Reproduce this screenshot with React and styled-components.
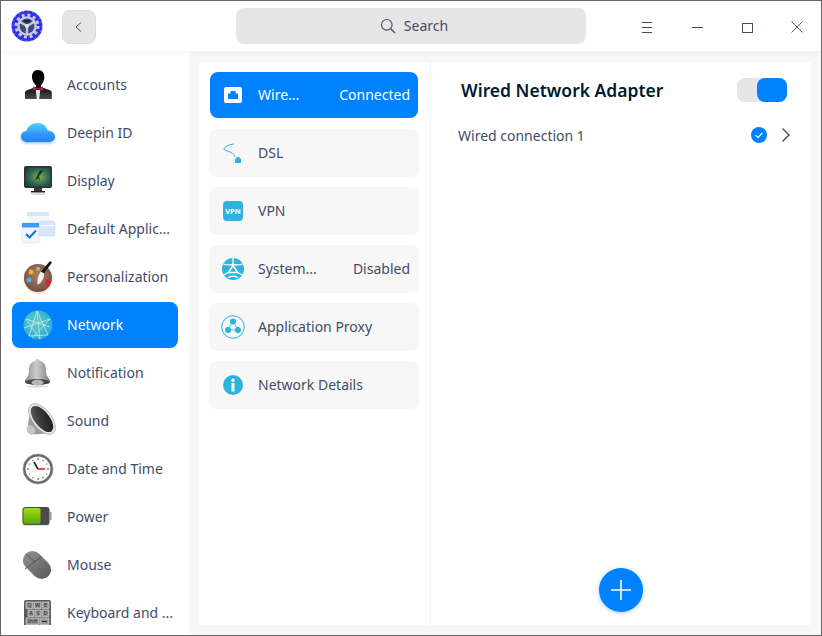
import styled, { createGlobalStyle } from 'styled-components'

const GlobalStyle = createGlobalStyle`
  html, body { margin: 0; padding: 0; background: #fff; }
  body { font-family: "Noto Sans", "Liberation Sans", sans-serif; }
  * { box-sizing: border-box; }
`

const AccountsIcon = () => (
  <svg width="36" height="36" viewBox="0 0 36 36">
    <defs>
      <linearGradient id="suit" x1="0" y1="0" x2="0" y2="1">
        <stop offset="0" stopColor="#000" />
        <stop offset=".6" stopColor="#111" />
        <stop offset="1" stopColor="#4a4a4a" />
      </linearGradient>
    </defs>
    <path d="M18 3c4.600 0 6.400 3.400 6.400 7 0 4-2.200 7-3.400 8.300v1.700l9 3.200c1.200.5 1.800 1.400 1.800 2.800V32H5v-6c0-1.400.6-2.300 1.800-2.800l9.200-3.200v-1.700C14.700 17 12 14 12 10c0-3.600 1.400-7 6-7z" fill="url(#suit)" />
    <path d="M15.800 23h4.400l-1 9h-2.400z" fill="#e8e8e8" />
    <path d="M13 19.500l4.500 1.800h1l4.500-1.800v4l-4.500-1.500h-1L13 23.500z" fill="#c2185b" />
  </svg>
)

const CloudIcon = () => (
  <svg width="36" height="36" viewBox="0 0 36 36">
    <defs>
      <linearGradient id="cloud" x1="0" y1="0" x2="0" y2="1">
        <stop offset="0" stopColor="#4ed2fb" />
        <stop offset=".6" stopColor="#2f96fb" />
        <stop offset="1" stopColor="#2b80fa" />
      </linearGradient>
      <filter id="cloudGlow" x="-20%" y="-20%" width="140%" height="150%">
        <feDropShadow dx="0" dy="1.500" stdDeviation="1.200" floodColor="#2b80fa" floodOpacity=".45" />
      </filter>
    </defs>
    <path d="M7.500 27C3.600 27 1 24.500 1 21.500c0-3 2.400-5.300 5.400-5.400C8 11.300 12 8 17.500 8c5.300 0 9 3 10 7.500 4 .3 7.500 2.500 7.500 6 0 3.200-2.800 5.500-6 5.500z" fill="url(#cloud)" filter="url(#cloudGlow)" />
  </svg>
)

const DisplayIcon = () => (
  <svg width="36" height="36" viewBox="0 0 36 36">
    <defs>
      <radialGradient id="wall" cx=".55" cy=".5" r=".7">
        <stop offset="0" stopColor="#86b13f" />
        <stop offset=".55" stopColor="#2f6a55" />
        <stop offset="1" stopColor="#1a3a44" />
      </radialGradient>
    </defs>
    <rect x="4" y="3" width="28" height="22" rx="2" fill="#2f2f2f" />
    <rect x="5.500" y="4.500" width="25" height="19" fill="url(#wall)" />
    <path d="M20 7l-3 6-2 5 3-3 2 3-1-5 4-5z" fill="#1d2a22" />
    <path d="M14 25h8v3h-8z" fill="#3a3a3a" />
    <path d="M11 28h14v1.500H11z" fill="#222" />
    <ellipse cx="18" cy="31" rx="8" ry="1" fill="#000" opacity=".15" />
  </svg>
)

const DefaultAppsIcon = () => (
  <svg width="36" height="36" viewBox="0 0 36 36">
    <rect x="7" y="1" width="22" height="20" rx="2" fill="#d6e6fb" />
    <rect x="7" y="5" width="22" height="14" fill="#f3f8fe" />
    <rect x="19" y="10" width="16" height="15" rx="2" fill="#d6e6fb" stroke="#c4dbf7" strokeWidth=".6" />
    <rect x="19.500" y="14" width="15" height="1" fill="#fff" />
    <rect x="2" y="12" width="17" height="20" rx="1.500" fill="#eef5fe" stroke="#c9dff9" strokeWidth=".6" />
    <rect x="2" y="12" width="17" height="4.500" fill="#3d9cf5" />
    <path d="M6 23l3.500 3.500L16 19.500" fill="none" stroke="#1272e6" strokeWidth="2" />
  </svg>
)

const PaletteIcon = () => (
  <svg width="36" height="36" viewBox="0 0 36 36">
    <defs>
      <radialGradient id="wood" cx=".5" cy=".4" r=".7">
        <stop offset="0" stopColor="#a8826a" />
        <stop offset="1" stopColor="#6a4632" />
      </radialGradient>
    </defs>
    <ellipse cx="18" cy="20" rx="15" ry="15" fill="#e9a98e" opacity=".35" />
    <circle cx="18" cy="19" r="14" fill="url(#wood)" />
    <circle cx="11" cy="13" r="2.500" fill="#f0b429" />
    <circle cx="18" cy="10" r="2.200" fill="#b8a48e" />
    <circle cx="9" cy="21" r="2.500" fill="#5aa7f2" />
    <circle cx="28" cy="23" r="2.500" fill="#e0184a" />
    <path d="M30 2l2 1.500-8 11-3-2z" fill="#1b1b1b" />
    <path d="M21 12.500l3 2.200c.5 4-2.500 9-6 11-1.500-3 0-9.500 3-13.200z" fill="#f4efe8" />
  </svg>
)

const GlobeIcon = () => (
  <svg width="36" height="36" viewBox="0 0 36 36">
    <defs>
      <radialGradient id="globe" cx=".4" cy=".4" r=".7">
        <stop offset="0" stopColor="#5fcfc0" />
        <stop offset="1" stopColor="#2aa3dc" />
      </radialGradient>
    </defs>
    <circle cx="18" cy="18" r="14.500" fill="url(#globe)" />
    <path d="M17 4l-8 25M17 4l11 24M6 12l24 8M4 21l26-9M9 29l19-1M17 4l3 28M6 12l14 20M30 12L12 31" fill="none" stroke="#e6f8fb" strokeWidth=".7" opacity=".85" />
  </svg>
)

const BellIcon = () => (
  <svg width="36" height="36" viewBox="0 0 36 36">
    <defs>
      <linearGradient id="bell" x1="0" y1="0" x2="1" y2="0">
        <stop offset="0" stopColor="#8a8a8a" />
        <stop offset=".45" stopColor="#cdcdcd" />
        <stop offset="1" stopColor="#808080" />
      </linearGradient>
    </defs>
    <path d="M17.500 4c1.200 0 2 .8 2 1.800C25 7 26 11 26 16c0 3.500 1.500 6.500 4 9v2H5v-2c2.500-2.500 4-5.500 4-9 0-5 1-9 6.500-10.200C15.500 4.800 16.300 4 17.500 4z" fill="url(#bell)" />
    <ellipse cx="17.500" cy="27" rx="12.500" ry="3" fill="#454545" />
    <ellipse cx="17.500" cy="27.500" rx="6" ry="3" fill="#b5b5b5" />
    <ellipse cx="17.500" cy="31.500" rx="11" ry="1" fill="#000" opacity=".15" />
  </svg>
)

const SpeakerIcon = () => (
  <svg width="36" height="36" viewBox="0 0 36 36">
    <defs>
      <linearGradient id="cone" x1="1" y1="0" x2="0" y2="1">
        <stop offset="0" stopColor="#151515" />
        <stop offset=".6" stopColor="#3c3c3c" />
        <stop offset="1" stopColor="#6a6a6a" />
      </linearGradient>
    </defs>
    <path d="M11 2l22 28-19 1.500-6-9.500z" fill="#9c9c9c" />
    <ellipse cx="11" cy="27" rx="4" ry="5" fill="#c4c4c4" transform="rotate(-30 11 27)" />
    <ellipse cx="22" cy="16" rx="18" ry="9.500" fill="#e4e4e4" stroke="#8c8c8c" strokeWidth=".5" transform="rotate(52 22 16)" />
    <ellipse cx="22" cy="16" rx="15.500" ry="7.500" fill="url(#cone)" transform="rotate(52 22 16)" />
  </svg>
)

const ClockIcon = () => (
  <svg width="36" height="36" viewBox="0 0 36 36">
    <circle cx="18" cy="18" r="15" fill="#666" />
    <circle cx="18" cy="18" r="15" fill="none" stroke="#9a9a9a" strokeWidth=".8" />
    <circle cx="18" cy="18" r="12.500" fill="#fbfbfb" />
    <g fill="#333">
      <circle cx="18" cy="8" r=".8" /><circle cx="18" cy="28" r=".8" /><circle cx="8" cy="18" r=".8" /><circle cx="28" cy="18" r=".8" />
      <circle cx="13" cy="9.300" r=".6" /><circle cx="23" cy="9.300" r=".6" /><circle cx="13" cy="26.700" r=".6" /><circle cx="23" cy="26.700" r=".6" />
      <circle cx="9.300" cy="13" r=".6" /><circle cx="26.700" cy="13" r=".6" /><circle cx="9.300" cy="23" r=".6" /><circle cx="26.700" cy="23" r=".6" />
    </g>
    <path d="M14 11l4 7" stroke="#222" strokeWidth="1.600" />
    <path d="M18 18h7" stroke="#e5393d" strokeWidth="1.800" />
  </svg>
)

const BatteryIcon = () => (
  <svg width="36" height="36" viewBox="0 0 36 36">
    <defs>
      <linearGradient id="charge" x1="0" y1="0" x2="0" y2="1">
        <stop offset="0" stopColor="#a4dc1e" />
        <stop offset="1" stopColor="#5aa600" />
      </linearGradient>
    </defs>
    <rect x="2" y="9" width="28" height="18.500" rx="3" fill="#b8e986" opacity=".45" />
    <rect x="2.500" y="8" width="27" height="18" rx="3" fill="#4b4b4b" />
    <rect x="29.500" y="13" width="2" height="8" fill="#9a9a9a" />
    <rect x="3.500" y="9" width="17" height="16" rx="2" fill="url(#charge)" />
  </svg>
)

const MouseIcon = () => (
  <svg width="36" height="36" viewBox="0 0 36 36">
    <defs>
      <linearGradient id="mouseBody" x1="0" y1="0" x2="0" y2="1">
        <stop offset="0" stopColor="#8e8e8e" />
        <stop offset="1" stopColor="#5c5c5c" />
      </linearGradient>
    </defs>
    <rect x="7.500" y="2" width="19" height="32" rx="9.500" fill="url(#mouseBody)" transform="rotate(-45 17 18)" />
    <path d="M6 7l9 8M5 22l16-12" stroke="#484848" strokeWidth=".8" fill="none" />
  </svg>
)

const KeyboardIcon = () => (
  <svg width="36" height="36" viewBox="0 0 36 36">
    <rect x="4" y="5" width="27" height="30" rx="2" fill="#5c5c5c" />
    <g fill="#9a9a9a" stroke="#dedede" strokeWidth=".6">
      <rect x="6" y="7" width="7" height="6.500" />
      <rect x="14" y="7" width="7" height="6.500" />
      <rect x="22" y="7" width="7" height="6.500" />
      <rect x="8" y="15" width="6" height="6.500" />
      <rect x="15" y="15" width="6" height="6.500" />
      <rect x="22" y="15" width="7" height="6.500" />
      <rect x="6" y="23" width="13" height="6.500" />
      <rect x="20" y="23" width="9" height="6.500" />
    </g>
    <g fill="#222" fontFamily="Noto Sans, sans-serif" fontSize="5.500" textAnchor="middle">
      <text x="9.500" y="12.300">Q</text>
      <text x="17.500" y="12.300">W</text>
      <text x="25.500" y="12.300">E</text>
      <text x="11" y="20.300">A</text>
      <text x="18" y="20.300">S</text>
      <text x="25.500" y="20.300">D</text>
      <text x="12.500" y="28.300" fontSize="4.800">Shift</text>
    </g>
    <path d="M22 26.500h5" stroke="#222" strokeWidth="1" />
  </svg>
)

const JackIcon = () => (
  <svg width="20" height="20" viewBox="0 0 20 20">
    <rect x="1" y="2" width="18" height="16" rx="2" fill="#fff" />
    <path d="M5 14V8.500h2.500V6h5v2.500H15V14z" fill="#0081ff" />
  </svg>
)

const CableIcon = () => (
  <svg width="22" height="22" viewBox="0 0 22 22">
    <path d="M12 2C7 2.500 2 4.500 2 7c0 2.500 9 1.500 11 8" fill="none" stroke="#2cb3de" strokeWidth="1" />
    <path d="M14.500 15h3v1.500H19V21h-6v-4.500h1.500z" fill="#2cb3de" />
  </svg>
)

const VpnIcon = () => (
  <VpnBadge>VPN</VpnBadge>
)

const SystemIcon = () => (
  <svg width="22" height="22" viewBox="0 0 22 22">
    <circle cx="11" cy="11" r="11" fill="#2cb3de" />
    <path d="M11 0v6.500M1.500 6c4 1.500 7 1 9.500 .5 2.500 .5 5.500 1 9.500-.5M6.500 14.500L1.500 17M15.500 14.500l5 2.500M6 19.500c3-1.500 7-1.500 10 0" fill="none" stroke="#fff" strokeWidth="1.300" />
    <path d="M11 7.500l4.500 7h-9z" fill="#2cb3de" stroke="#fff" strokeWidth="1.600" />
  </svg>
)

const ProxyIcon = () => (
  <svg width="24" height="24" viewBox="0 0 24 24">
    <circle cx="12" cy="12" r="11.300" fill="none" stroke="#2cb3de" strokeWidth="1" />
    <path d="M12 6l5 9H7z" fill="none" stroke="#2cb3de" strokeWidth=".8" />
    <circle cx="12" cy="6.500" r="3" fill="#2cb3de" />
    <circle cx="7" cy="15" r="3" fill="#2cb3de" />
    <circle cx="17" cy="15" r="3" fill="#2cb3de" />
  </svg>
)

const InfoIcon = () => (
  <svg width="20" height="20" viewBox="0 0 20 20">
    <circle cx="10" cy="10" r="10" fill="#2cb3de" />
    <circle cx="10" cy="5.200" r="1.700" fill="#fff" />
    <rect x="8.500" y="8" width="3" height="8.500" rx=".5" fill="#fff" />
  </svg>
)

const sideItems = [
  { name: 'Accounts', icon: <AccountsIcon /> },
  { name: 'Deepin ID', icon: <CloudIcon /> },
  { name: 'Display', icon: <DisplayIcon /> },
  { name: 'Default Applic...', icon: <DefaultAppsIcon /> },
  { name: 'Personalization', icon: <PaletteIcon /> },
  { name: 'Network', icon: <GlobeIcon />, active: true },
  { name: 'Notification', icon: <BellIcon /> },
  { name: 'Sound', icon: <SpeakerIcon /> },
  { name: 'Date and Time', icon: <ClockIcon /> },
  { name: 'Power', icon: <BatteryIcon /> },
  { name: 'Mouse', icon: <MouseIcon /> },
  { name: 'Keyboard and ...', icon: <KeyboardIcon /> },
]

const netItems = [
  { name: 'Wire...', status: 'Connected', icon: <JackIcon />, active: true },
  { name: 'DSL', icon: <CableIcon /> },
  { name: 'VPN', icon: <VpnIcon /> },
  { name: 'System...', status: 'Disabled', icon: <SystemIcon /> },
  { name: 'Application Proxy', icon: <ProxyIcon /> },
  { name: 'Network Details', icon: <InfoIcon /> },
]

const App = () => {
  return (
    <>
      <GlobalStyle />
      <Window>
        <TitleBar>
          <Logo>
            <svg width="32" height="32" viewBox="0 0 32 32">
              <circle cx="16" cy="16" r="15.500" fill="#2f2ff0" />
              <circle cx="16" cy="16" r="14.800" fill="none" stroke="#b4b8f5" strokeWidth="1" strokeDasharray="1 3.650" />
              <circle cx="16" cy="16" r="11" fill="none" stroke="#c8cbda" strokeWidth="3" strokeDasharray="3 2.760" />
              <circle cx="16" cy="16" r="9.800" fill="#c8cbda" />
              <circle cx="16" cy="16" r="7.500" fill="#3f4a78" />
              <path d="M16 16v8M16 16l-7-4M16 16l7-4" stroke="#c8cbda" strokeWidth="2.200" />
              <ellipse cx="16" cy="11" rx="3.500" ry="1.500" fill="#1b2350" />
              <circle cx="16" cy="16" r="2" fill="#e4e6ee" />
            </svg>
          </Logo>
          <BackButton>
            <svg width="10" height="14" viewBox="0 0 10 14">
              <path d="M7 2.500L2 7l5 4.500" fill="none" stroke="#414d68" strokeWidth="1" />
            </svg>
          </BackButton>
          <SearchBox>
            <svg width="16" height="16" viewBox="0 0 16 16">
              <circle cx="6.800" cy="6.800" r="5.300" fill="none" stroke="#414d68" strokeWidth="1.100" />
              <path d="M10.700 10.700L15 15" stroke="#414d68" strokeWidth="1.300" />
            </svg>
            <SearchLabel>Search</SearchLabel>
          </SearchBox>
          <WindowButtons>
            <WindowButton>
              <svg width="12" height="12" viewBox="0 0 12 12">
                <path d="M1 1.500h10M1 6.500h10M1 11.500h10" stroke="#414d68" strokeWidth="1" />
              </svg>
            </WindowButton>
            <WindowButton>
              <svg width="12" height="12" viewBox="0 0 12 12">
                <path d="M1 6.500h11" stroke="#414d68" strokeWidth="1" />
              </svg>
            </WindowButton>
            <WindowButton>
              <svg width="12" height="12" viewBox="0 0 12 12">
                <rect x="1.500" y="2.500" width="10" height="9" fill="none" stroke="#414d68" strokeWidth="1" />
              </svg>
            </WindowButton>
            <WindowButton>
              <svg width="12" height="12" viewBox="0 0 12 12">
                <path d="M.5.500l11 11M11.500.500l-11 11" stroke="#414d68" strokeWidth=".9" />
              </svg>
            </WindowButton>
          </WindowButtons>
        </TitleBar>
        <Body>
          <Sidebar>
            <SideList>
              {sideItems.map((item) => (
                <SideItem key={item.name} $active={item.active}>
                  <SideIcon>{item.icon}</SideIcon>
                  <SideLabel>{item.name}</SideLabel>
                </SideItem>
              ))}
            </SideList>
          </Sidebar>
          <Content>
            <Panel>
              <NetColumn>
                {netItems.map((item) => (
                  <NetItem key={item.name} $active={item.active}>
                    <NetIcon>{item.icon}</NetIcon>
                    <NetName>{item.name}</NetName>
                    {item.status && <NetStatus>{item.status}</NetStatus>}
                  </NetItem>
                ))}
              </NetColumn>
              <DetailColumn>
                <DetailHeader>
                  <DetailTitle>Wired Network Adapter</DetailTitle>
                  <Toggle><ToggleKnob /></Toggle>
                </DetailHeader>
                <ConnectionRow>
                  <ConnectionName>Wired connection 1</ConnectionName>
                  <svg width="16" height="16" viewBox="0 0 16 16">
                    <circle cx="8" cy="8" r="8" fill="#0081ff" />
                    <path d="M4.500 8.200l2.500 2.500 4.500-5" fill="none" stroke="#fff" strokeWidth="1.200" />
                  </svg>
                  <Chevron>
                    <svg width="10" height="16" viewBox="0 0 10 16">
                      <path d="M1.500 1.500L8 8l-6.500 6.500" fill="none" stroke="#414d68" strokeWidth="1.400" />
                    </svg>
                  </Chevron>
                </ConnectionRow>
                <AddRow>
                  <AddButton>
                    <svg width="20" height="20" viewBox="0 0 20 20">
                      <path d="M10 0v20M0 10h20" stroke="#fff" strokeWidth="1.600" />
                    </svg>
                  </AddButton>
                </AddRow>
              </DetailColumn>
            </Panel>
          </Content>
        </Body>
      </Window>
    </>
  )
}

const Window = styled.div`
  width: 822px;
  height: 636px;
  border: 1px solid #666;
  display: flex;
  flex-direction: column;
  background: #fff;
  overflow: hidden;
  color: #414d68;
  font-size: 14px;
`

const TitleBar = styled.header`
  height: 50px;
  flex: none;
  display: flex;
  align-items: center;
  background: #fff;
  position: relative;
  z-index: 1;
  box-shadow: 0 2px 6px rgba(0, 0, 0, 0.04);
`

const Logo = styled.div`
  width: 32px;
  height: 32px;
  margin-left: 10px;
  display: flex;
`

const BackButton = styled.button`
  width: 34px;
  height: 34px;
  margin: 2px 0 0 19px;
  padding: 0;
  display: flex;
  align-items: center;
  justify-content: center;
  background: #e6e6e6;
  border: 1px solid #dcdcdc;
  border-radius: 8px;
`

const SearchBox = styled.div`
  width: 350px;
  height: 36px;
  margin-left: 140px;
  padding-left: 6px;
  display: flex;
  align-items: center;
  justify-content: center;
  gap: 8px;
  background: #e6e6e6;
  border-radius: 8px;
  font-size: 14px;
`

const SearchLabel = styled.span`
  padding-bottom: 2px;
`

const WindowButtons = styled.div`
  margin-left: auto;
  margin-right: -1px;
  display: flex;
`

const WindowButton = styled.div`
  width: 50px;
  height: 50px;
  padding-top: 2px;
  display: flex;
  align-items: center;
  justify-content: center;
`

const Body = styled.div`
  flex: 1;
  min-height: 0;
  display: flex;
`

const Sidebar = styled.nav`
  width: 188px;
  flex: none;
  padding: 11px 11px 10px;
  display: flex;
  background: #fff;
`

const SideList = styled.div`
  flex: 1;
  min-width: 0;
  display: flex;
  flex-direction: column;
  gap: 2px;
  overflow: hidden;
`

const SideItem = styled.div`
  height: 46px;
  flex: none;
  display: flex;
  align-items: center;
  padding: 0 6px 0 8px;
  border-radius: 8px;
  background: ${({ $active }) => ($active ? '#0081ff' : 'transparent')};
  color: ${({ $active }) => ($active ? '#fff' : '#414d68')};
`

const SideIcon = styled.div`
  width: 36px;
  height: 36px;
  flex: none;
  display: flex;
`

const SideLabel = styled.span`
  margin-left: 11px;
  padding-bottom: 2px;
  white-space: nowrap;
`

const Content = styled.main`
  flex: 1;
  min-width: 0;
  padding: 11px 10px 10px;
  display: flex;
  background: #f7f7f7;
`

const Panel = styled.div`
  flex: 1;
  display: flex;
  background: #fff;
  min-width: 0;
`

const NetColumn = styled.div`
  width: 232px;
  flex: none;
  padding: 10px 11px 10px 10px;
  display: flex;
  flex-direction: column;
  gap: 10px;
  border-right: 1px solid #f3f3f3;
`

const NetItem = styled.div`
  height: ${({ $active }) => ($active ? '46px' : '48px')};
  margin: ${({ $active }) => ($active ? '0 1px 1px' : '0')};
  display: flex;
  align-items: center;
  padding: 0 ${({ $active }) => ($active ? '8px' : '9px')} 0 ${({ $active }) => ($active ? '13px' : '14px')};
  border-radius: 8px;
  background: ${({ $active }) => ($active ? '#0081ff' : '#f7f7f7')};
  color: ${({ $active }) => ($active ? '#fff' : '#414d68')};
`

const NetIcon = styled.div`
  width: 20px;
  height: 24px;
  flex: none;
  display: flex;
  align-items: center;
  justify-content: center;

  & > svg { flex: none; }
`

const NetName = styled.span`
  margin-left: 15px;
  padding-bottom: 2px;
  flex: 1;
  white-space: nowrap;
`

const NetStatus = styled.span`
  flex: none;
  padding-bottom: 2px;
  white-space: nowrap;
`

const VpnBadge = styled.div`
  width: 20px;
  height: 20px;
  flex: none;
  display: flex;
  align-items: center;
  justify-content: center;
  border-radius: 4px;
  background: #2cb3de;
  color: #fff;
  font-size: 7.5px;
  font-weight: 700;
`

const DetailColumn = styled.section`
  flex: 1;
  min-width: 0;
  display: flex;
  flex-direction: column;
  padding: 16px 24px 13px 27px;
`

const DetailHeader = styled.div`
  height: 24px;
  display: flex;
  align-items: center;
  justify-content: space-between;
  padding-left: 3px;
`

const DetailTitle = styled.h2`
  margin: 0;
  font-size: 17.5px;
  font-weight: 600;
  color: #001a2e;
`

const Toggle = styled.div`
  width: 50px;
  height: 24px;
  display: flex;
  justify-content: flex-end;
  border-radius: 8px;
  background: #e6e6e6;
`

const ToggleKnob = styled.div`
  width: 30px;
  height: 24px;
  border-radius: 8px;
  background: #0081ff;
`

const ConnectionRow = styled.div`
  height: 24px;
  margin: 21px -4px 0 0;
  display: flex;
  align-items: center;
`

const ConnectionName = styled.span`
  flex: 1;
`

const Chevron = styled.span`
  margin-left: 14px;
  width: 10px;
  display: flex;
`

const AddRow = styled.div`
  margin: auto 3px 0 0;
  display: flex;
  justify-content: center;
`

const AddButton = styled.button`
  width: 44px;
  height: 44px;
  padding: 0;
  border: none;
  border-radius: 50%;
  display: flex;
  align-items: center;
  justify-content: center;
  background: #0081ff;
  box-shadow: 0 1px 4px rgba(0, 129, 255, 0.4);
`

export default App
